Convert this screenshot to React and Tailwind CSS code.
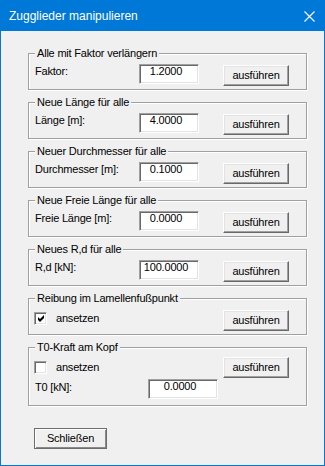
const sections = [
  { title: "Alle mit Faktor verlängern", label: "Faktor:", value: "1.2000" },
  { title: "Neue Länge für alle", label: "Länge [m]:", value: "4.0000" },
  { title: "Neuer Durchmesser für alle", label: "Durchmesser [m]:", value: "0.1000" },
  { title: "Neue Freie Länge für alle", label: "Freie Länge [m]:", value: "0.0000" },
  { title: "Neues R,d für alle", label: "R,d [kN]:", value: "100.0000" },
];

function Btn({ children, className = "" }) {
  return (
    <button
      type="button"
      className={`flex h-[21px] items-center justify-center border border-t-white border-l-white border-r-[#696969] border-b-[#696969] bg-[#f0f0f0] leading-[13px] text-black shadow-[inset_-1px_-1px_0_#a0a0a0,inset_1px_1px_0_#e3e3e3] ${className}`}
    >
      {children}
    </button>
  );
}

function Field({ value, className = "" }) {
  return (
    <div
      className={`flex h-[20px] items-start justify-center border border-t-[#a0a0a0] border-l-[#a0a0a0] border-r-white border-b-white bg-white pr-[6px] leading-[13px] shadow-[inset_1px_1px_0_#696969,inset_-1px_-1px_0_#e3e3e3] ${className}`}
    >
      {value}
    </div>
  );
}

function Check({ checked }) {
  return (
    <span className="flex h-[13px] w-[13px] shrink-0 items-center justify-center border border-t-[#a0a0a0] border-l-[#a0a0a0] border-r-white border-b-white bg-white shadow-[inset_1px_1px_0_#696969,inset_-1px_-1px_0_#e3e3e3]">
      {checked ? (
        <svg width="7" height="7" viewBox="0 0 7 7" className="ml-px">
          <path d="M0 2 L2 4 L6 0 L6 3 L2 7 L0 5 Z" fill="#000" />
        </svg>
      ) : null}
    </span>
  );
}

function Group({ title, children }) {
  return (
    <div className="border border-[#a0a0a0] shadow-[1px_1px_0_#fff,inset_1px_1px_0_#fff]">
      <div className="-mt-[7px] ml-[6px] w-fit bg-[#f0f0f0] px-[2px] leading-[13px]">{title}</div>
      {children}
    </div>
  );
}

export default function App() {
  return (
    <div className="flex h-[466px] w-[325px] flex-col bg-[#0078d7] px-px pb-px font-['Liberation_Sans',Arial,sans-serif] text-[11px] tracking-[-0.2px] text-black">
      <div className="flex h-[31px] shrink-0 items-center justify-between pl-[8px] pr-[9px]">
        <span className="text-[12px] leading-[14px] tracking-normal text-white">Zugglieder manipulieren</span>
        <svg width="11" height="11" viewBox="0 0 11 11" className="mt-px">
          <path d="M0.5 0.5 L10.5 10.5 M10.5 0.5 L0.5 10.5" stroke="#fff" strokeWidth="1.1" />
        </svg>
      </div>

      <div className="flex-1 bg-[#f0f0f0] pl-[27px] pt-[22px]">
        <div className="flex w-[279px] flex-col gap-[12px]">
          {sections.map((s) => (
            <Group key={s.title} title={s.title}>
              <div className="mt-[4px] flex items-start pb-[3px] pl-[6px]">
                <span className="mt-[1px] w-[104px] leading-[13px]">{s.label}</span>
                <Field value={s.value} className="w-[60px]" />
                <Btn className="ml-[24px] mt-[1px] w-[66px]">ausführen</Btn>
              </div>
            </Group>
          ))}

          <Group title="Reibung im Lamellenfußpunkt">
            <div className="mt-[4px] flex items-start pb-[3px] pl-[5px]">
              <div className="mt-[3px] flex w-[189px] items-center">
                <Check checked />
                <span className="ml-[9px] leading-[13px]">ansetzen</span>
              </div>
              <Btn className="mt-[1px] w-[66px]">ausführen</Btn>
            </div>
          </Group>

          <Group title="T0-Kraft am Kopf">
            <div className="mt-[3px] flex h-[21px] items-center pl-[5px]">
              <div className="flex w-[189px] items-center">
                <Check />
                <span className="ml-[9px] leading-[13px]">ansetzen</span>
              </div>
              <Btn className="h-[21px] w-[66px]">ausführen</Btn>
            </div>
            <div className="mt-[1px] flex items-start pb-[6px] pl-[6px]">
              <span className="mt-[2px] w-[113px] leading-[13px]">T0 [kN]:</span>
              <Field value="0.0000" className="w-[70px]" />
            </div>
          </Group>
        </div>

        <button
          type="button"
          className="ml-[6px] mt-[22px] flex h-[21px] w-[73px] items-center justify-center border border-[#6d6d6d] bg-[#f0f0f0] leading-[13px] shadow-[inset_1px_1px_0_#fff,inset_-1px_-1px_0_#8a8a8a]"
        >
          Schließen
        </button>
      </div>
    </div>
  );
}
